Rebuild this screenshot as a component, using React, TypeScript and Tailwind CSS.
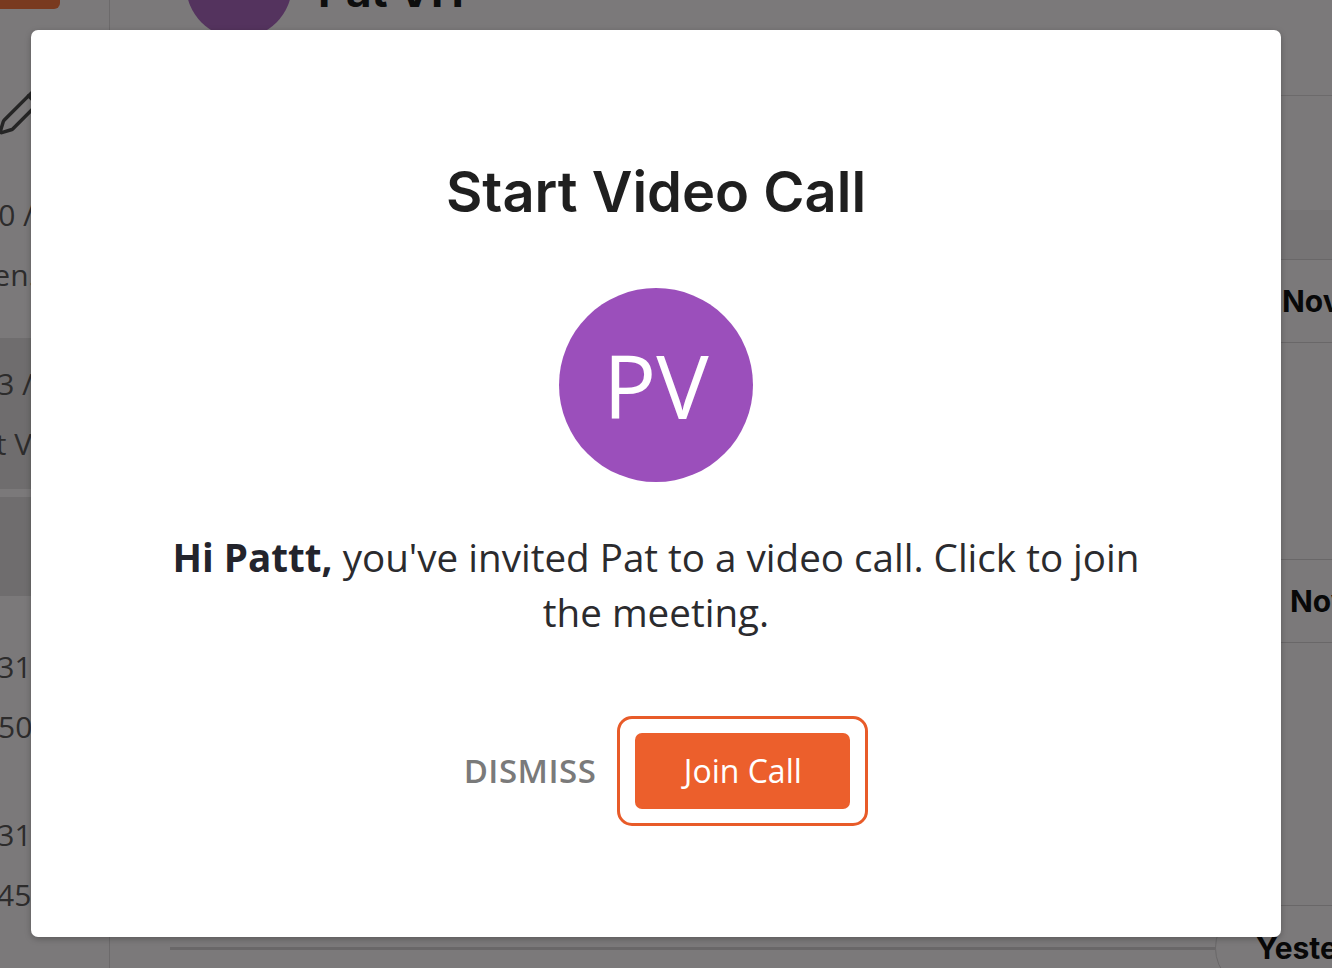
import { Pencil } from "lucide-react";

const leftRows = [
  { top: "30 / 2020", topMl: "-ml-[19px]", bottom: "Seen.", bottomMl: "-ml-[40px]", dark: false, h: "h-[158px]", pt: "pt-[20px]" },
  { top: "13 / 2020", topMl: "-ml-[20px]", bottom: "Pat VH", bottomMl: "-ml-[39px]", dark: true, h: "h-[159px]", pt: "pt-[31px]" },
  { top: "", topMl: "", bottom: "", bottomMl: "", dark: true, h: "h-[107px]", pt: "pt-[20px]" },
  { top: "10/31/2020", topMl: "-ml-[48px]", bottom: "4:50 PM", bottomMl: "-ml-[27px]", dark: false, h: "h-[168px]", pt: "pt-[48px]" },
  { top: "10/31/2020", topMl: "-ml-[48px]", bottom: "3:45 PM", bottomMl: "-ml-[28px]", dark: false, h: "h-[168px]", pt: "pt-[48px]" },
];

function BackgroundApp() {
  return (
    <div className="flex h-full w-full bg-[#f7f3f5] font-['Open_Sans',sans-serif]">
      {/* conversation list */}
      <aside className="w-[110px] shrink-0 border-r border-[#d9d5d7] flex flex-col">
        <div className="h-[180px] flex flex-col">
          <div className="h-[9px] w-[60px] rounded-br-[6px] bg-[#f2743f]" />
          <div className="mt-[76px] -ml-[4px] text-[#4a4a4a]">
            <Pencil size={52} strokeWidth={1.6} />
          </div>
        </div>
        {leftRows.map((r, i) => (
          <div
            key={i}
            className={`${r.h} ${r.pt} flex flex-col gap-[30px] border-b-[8px] border-[#f7f3f5] text-[30px] text-[#5a5859] whitespace-nowrap ${
              r.dark ? "bg-[#dfdbdd]" : ""
            }`}
          >
            <span className={`${r.topMl} leading-[30px]`}>{r.top}</span>
            <span className={`${r.bottomMl} leading-[30px]`}>{r.bottom}</span>
          </div>
        ))}
      </aside>

      {/* chat */}
      <main className="flex-1 flex flex-col">
        <header className="h-[96px] shrink-0 border-b border-[#d9d5d7] flex items-start pl-[76px] gap-[26px]">
          <div className="size-[106px] -mt-[68px] rounded-full bg-[#a866bd]" />
          <span className="-mt-[42px] text-[44px] font-bold text-[#1c1c1c] font-['Inter',sans-serif]">
            Pat VH
          </span>
        </header>
        <div className="h-[114px] shrink-0" />
        <div className="h-[49px] shrink-0 bg-[#ece8ea]" />
        <div className="h-[84px] shrink-0 flex">
          <div className="ml-[1062px] h-full px-[110px] flex items-center border-y border-[#d2ced0] rounded-[42px] text-[30px] font-bold text-[#111] whitespace-nowrap font-['Inter',sans-serif]">
            Nov 28
          </div>
        </div>
        <div className="h-[216px] shrink-0" />
        <div className="h-[84px] shrink-0 flex">
          <div className="ml-[1070px] h-full px-[110px] flex items-center border-y border-[#d2ced0] rounded-[42px] text-[30px] font-bold text-[#111] whitespace-nowrap font-['Inter',sans-serif]">
            Nov 30
          </div>
        </div>
        <div className="h-[262px] shrink-0" />
        <div className="flex items-start">
          <div className="ml-[60px] mt-[42px] w-[1045px] h-[3px] bg-[#d2ced0]" />
          <div className="h-[86px] px-[40px] flex items-center border border-[#d2ced0] rounded-full text-[30px] font-bold text-[#111] whitespace-nowrap font-['Inter',sans-serif]">
            Yesterday
          </div>
        </div>
      </main>
    </div>
  );
}

export default function App() {
  return (
    <div className="relative w-[1332px] h-[968px] overflow-hidden">
      <BackgroundApp />
      <div className="absolute inset-0 bg-black/50 pt-[30px] pl-[31px]">
        <div className="w-[1250px] h-[907px] bg-white rounded-[7px] shadow-[0_2px_6px_rgba(0,0,0,0.25)] flex flex-col items-center pt-[132px]">
          <h1 className="text-[56px] leading-[60px] font-semibold text-[#1f1f1f] font-['Inter',sans-serif]">
            Start Video Call
          </h1>
          <div className="mt-[66px] size-[194px] rounded-full bg-[#9b4fbb] flex items-center justify-center">
            <span className="text-[88px] leading-none text-white font-['Open_Sans',sans-serif]">PV</span>
          </div>
          <p className="mt-[48px] w-[1000px] text-center text-[38.6px] leading-[55px] text-[#2b2b2e] font-['Open_Sans',sans-serif]">
            <span className="font-bold text-[#23242c]">Hi Pattt,</span> you've invited Pat to a video call. Click to join the meeting.
          </p>
          <div className="mt-[76px] pl-[20px] flex items-center gap-[21px] font-['Open_Sans',sans-serif]">
            <button className="text-[33px] font-semibold tracking-[0.5px] text-[#7a7a7a]">DISMISS</button>
            <div className="border-[3px] border-[#e85b29] rounded-[15px] px-[15px] py-[14px]">
              <button className="w-[215px] h-[76px] rounded-[7px] bg-[#ec5f2c] text-white text-[32px]">
                Join Call
              </button>
            </div>
          </div>
        </div>
      </div>
    </div>
  );
}
